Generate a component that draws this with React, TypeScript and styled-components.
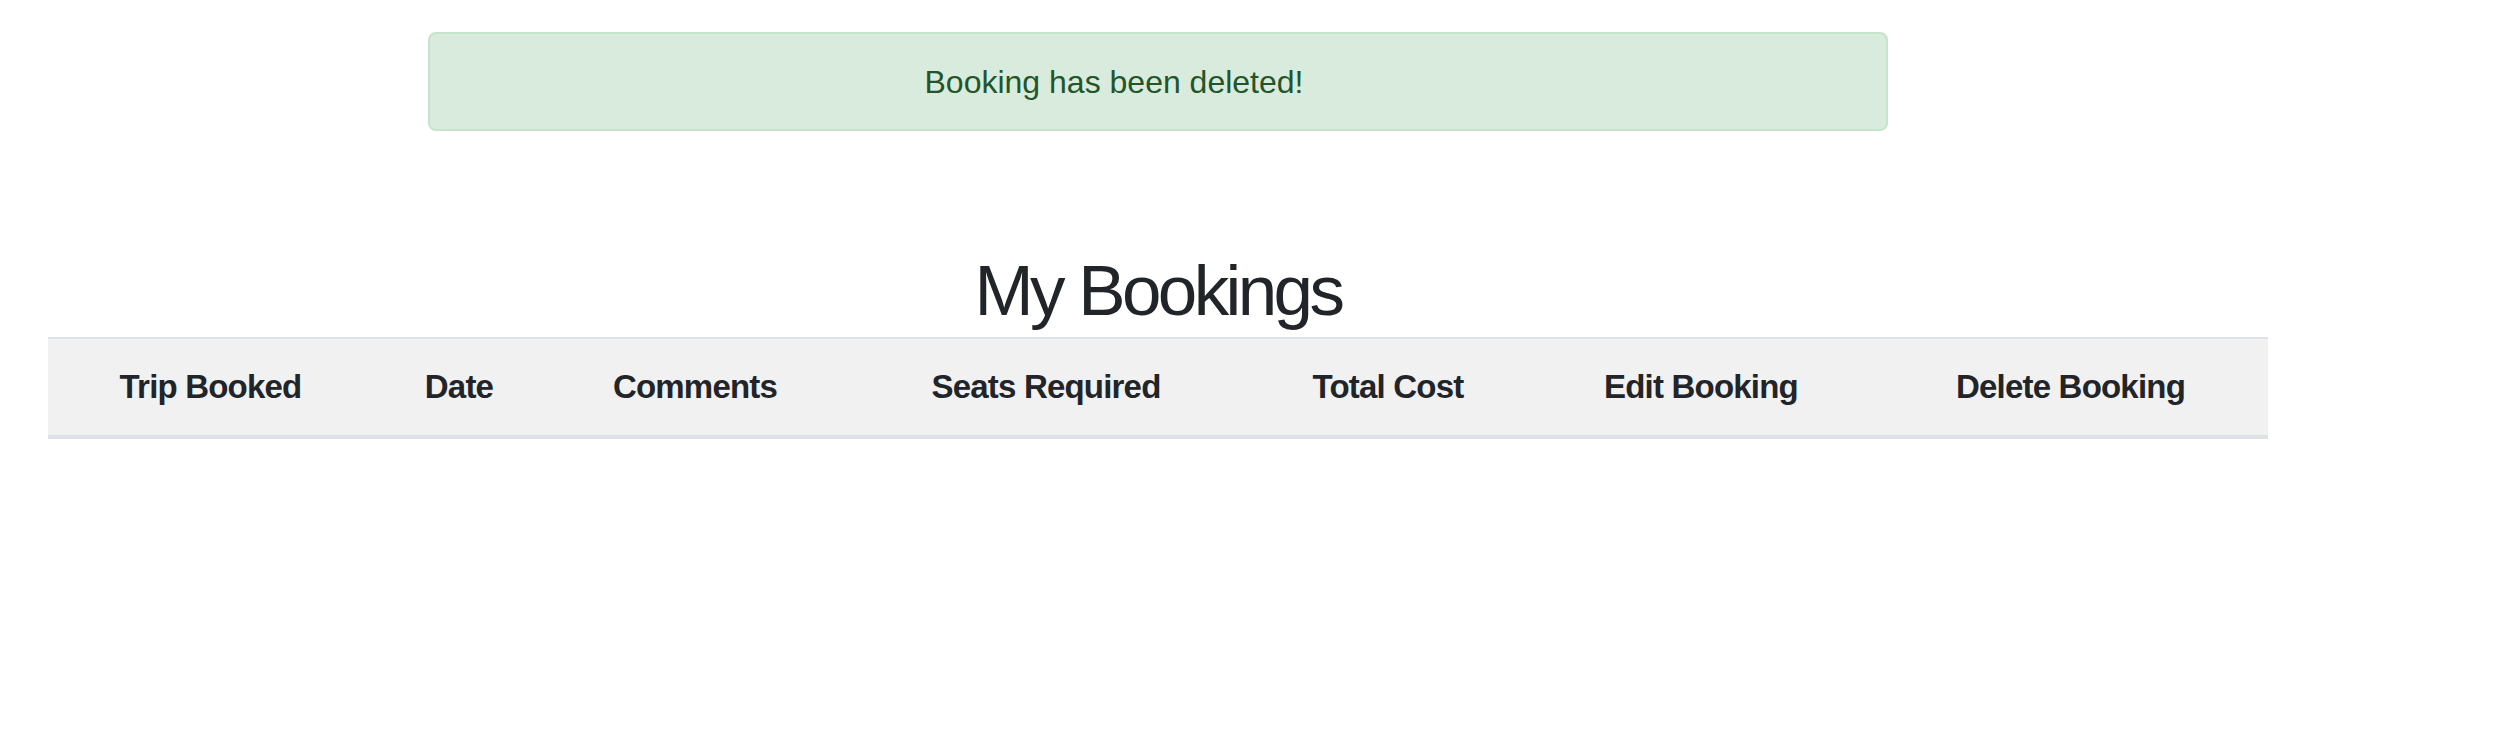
import React from "react";
import styled, { createGlobalStyle } from "styled-components";

const GlobalStyle = createGlobalStyle`
  html, body {
    margin: 0;
    padding: 0;
    background: #ffffff;
  }
  body {
    font-family: "Liberation Sans", Arial, sans-serif;
    color: #212529;
  }
  * { box-sizing: border-box; }
`;

const Page = styled.main`
  width: 2220px;
  margin-left: 48px;
  padding-top: 32px;
`;

const Alert = styled.div`
  width: 1460px;
  margin: 0 auto;
  padding: 24px 128px 23px 40px;
  border: 2px solid #c6e3cc;
  border-radius: 8px;
  background: #d9ebdd;
  color: #22552a;
  font-size: 32px;
  line-height: 48px;
  text-align: center;
`;

const Title = styled.h2`
  margin: 118px 0 4px;
  font-size: 71px;
  line-height: 84px;
  font-weight: 400;
  letter-spacing: -3.6px;
  text-align: center;
  color: #212529;
`;

const Table = styled.table`
  width: 100%;
  border-collapse: collapse;
  table-layout: fixed;
`;

const Col = styled.col<{ $w: number }>`
  width: ${(p) => p.$w}px;
`;

const HeadRow = styled.tr`
  background: #f1f1f1;
`;

const HeadCell = styled.th`
  padding: 24px;
  border-top: 2px solid #dee2e6;
  border-bottom: 4px solid #dee2e6;
  font-size: 33px;
  line-height: 48px;
  font-weight: 700;
  letter-spacing: -0.8px;
  text-align: center;
  white-space: nowrap;
  color: #212529;
`;

const columns: { label: string; w: number }[] = [
  { label: "Trip Booked", w: 325 },
  { label: "Date", w: 172 },
  { label: "Comments", w: 300 },
  { label: "Seats Required", w: 402 },
  { label: "Total Cost", w: 282 },
  { label: "Edit Booking", w: 344 },
  { label: "Delete Booking", w: 395 },
];

export default function App() {
  return (
    <>
      <GlobalStyle />
      <Page>
        <Alert role="alert">Booking has been deleted!</Alert>
        <Title>My Bookings</Title>
        <Table>
          <colgroup>
            {columns.map((c) => (
              <Col key={c.label} $w={c.w} />
            ))}
          </colgroup>
          <thead>
            <HeadRow>
              {columns.map((c) => (
                <HeadCell key={c.label}>{c.label}</HeadCell>
              ))}
            </HeadRow>
          </thead>
          <tbody />
        </Table>
      </Page>
    </>
  );
}
